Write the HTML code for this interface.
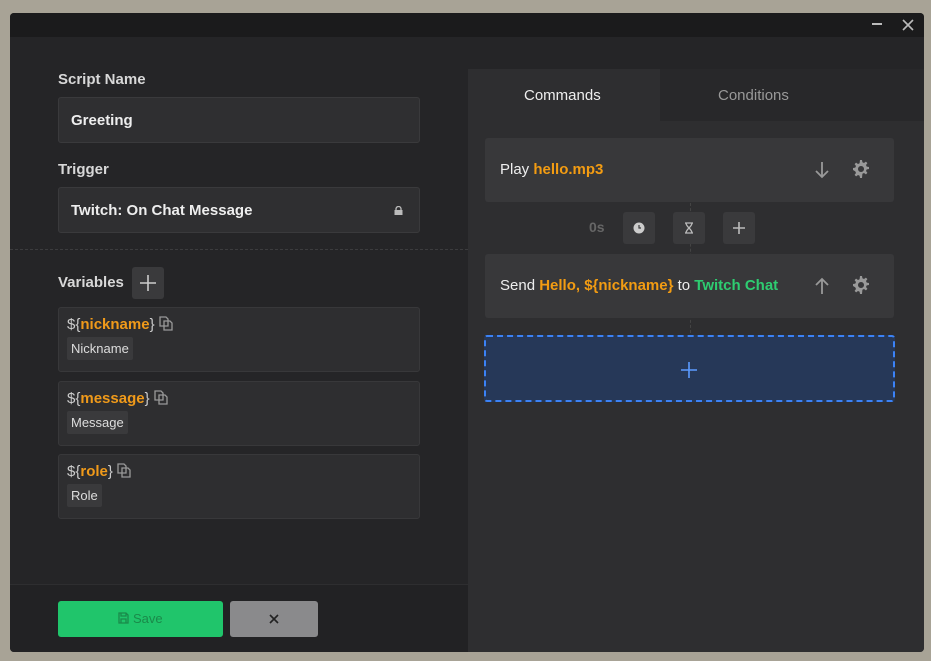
<!DOCTYPE html>
<html><head><style>
*{box-sizing:border-box;margin:0;padding:0}
body{width:931px;height:661px;background:#a8a396;font-family:"Liberation Sans",sans-serif;position:relative;overflow:hidden}
.win{position:absolute;left:10px;top:13px;width:914px;height:639px;background:#252527;border-radius:4px;overflow:hidden}
.title{position:absolute;left:0;top:0;width:914px;height:24px;background:#1b1b1c}
.abs{position:absolute}
.lbl{color:#d8d8d8;font-size:15px;font-weight:bold}
.inp{position:absolute;left:48px;width:362px;height:46px;background:#2f2f31;border:1px solid #3a3a3c;border-radius:3px;color:#eee;font-size:15px;font-weight:bold;padding:14px 12px}
.var{position:absolute;left:48px;width:362px;height:65px;background:#2e2e30;border:1px solid #38383a;border-radius:3px;padding:8px 8px}
.vn{color:#ccc;font-size:15px}
.vn b{color:#f09a1a}
.tag{display:inline-block;background:#3a3a3c;color:#ddd;font-size:13px;padding:4px 4px;margin-top:4px;border-radius:2px}
.o{color:#f39c12;font-weight:bold}
.g{color:#2ecc71;font-weight:bold}
.cmd{position:absolute;left:475px;width:409px;height:64px;background:#38383a;border-radius:3px;color:#eee;font-size:15px;padding:23px 15px}
.sb{position:absolute;width:32px;height:32px;background:#3a3a3c;border-radius:3px;color:#bbb;text-align:center;line-height:32px;font-size:18px}
</style></head><body>
<svg width="0" height="0" style="position:absolute"><defs>
<g id="gear"><path fill="#999" fill-rule="evenodd" d="M8 0h2l.4 2.3 1.6.7 1.9-1.4 1.5 1.5-1.4 1.9.7 1.6 2.3.4v2l-2.3.4-.7 1.6 1.4 1.9-1.5 1.5-1.9-1.4-1.6.7L10 18H8l-.4-2.3-1.6-.7-1.9 1.4-1.5-1.5 1.4-1.9-.7-1.6L1 10V8l2.3-.4.7-1.6-1.4-1.9 1.5-1.5 1.9 1.4 1.6-.7zM9 6a3 3 0 1 0 .01 0z"/></g>
<g id="copy"><path fill="none" stroke="#999" stroke-width="1.3" d="M1 1h6l2 2v7H1zM5 5h6l2 2v7H5z"/></g>
</defs></svg>
<div class="win">
<div class="title"></div>
<div class="abs" style="left:862px;top:10px;width:10px;height:2px;background:#bbb"></div>
<svg class="abs" style="left:892px;top:6px" width="12" height="12"><path d="M1 1L11 11M11 1L1 11" stroke="#bbb" stroke-width="1.6"/></svg>
<div class="abs" style="left:458px;top:56px;width:456px;height:583px;background:#2e2e30"></div>
<div class="abs" style="left:650px;top:56px;width:264px;height:52px;background:#28282a"></div>
<div class="abs" style="left:514px;top:74px;color:#eee;font-size:15px">Commands</div>
<div class="abs" style="left:708px;top:74px;color:#999;font-size:15px">Conditions</div>

<div class="abs lbl" style="left:48px;top:58px">Script Name</div>
<div class="inp" style="top:84px">Greeting</div>
<div class="abs lbl" style="left:48px;top:148px">Trigger</div>
<div class="inp" style="top:174px">Twitch: On Chat Message<svg class="abs" style="left:335px;top:18px" width="9" height="9"><rect x="0.5" y="4" width="8" height="5" fill="#bbb"/><path d="M2 4.5V3a2.5 2.5 0 0 1 5 0v1.5" stroke="#bbb" fill="none" stroke-width="1.3"/></svg></div>
<div class="abs" style="left:0;top:236px;width:458px;border-top:1px dashed #3c3c3e"></div>
<div class="abs lbl" style="left:48px;top:261px">Variables</div>
<div class="sb" style="left:122px;top:254px"><svg width="32" height="32"><path d="M16 8v16M8 16h16" stroke="#ccc" stroke-width="1.6"/></svg></div>
<div class="var" style="top:294px"><div class="vn">${<b>nickname</b>} <svg width="15" height="15" style="vertical-align:-2px"><use href="#copy"/></svg></div><span class="tag">Nickname</span></div>
<div class="var" style="top:368px"><div class="vn">${<b>message</b>} <svg width="15" height="15" style="vertical-align:-2px"><use href="#copy"/></svg></div><span class="tag">Message</span></div>
<div class="var" style="top:441px"><div class="vn">${<b>role</b>} <svg width="15" height="15" style="vertical-align:-2px"><use href="#copy"/></svg></div><span class="tag">Role</span></div>

<div class="abs" style="left:0;top:571px;width:458px;height:68px;background:#222224;border-top:1px solid #2e2e30"></div>
<div class="abs" style="left:48px;top:588px;width:165px;height:36px;background:#20c56b;border-radius:3px;color:#1a8a4a;font-size:13px;text-align:center;line-height:36px"><svg width="11" height="12" style="vertical-align:-1px"><path d="M1 1h7l2 2v8H1zM3 1v3h5V1M3 11V7h5v4" fill="none" stroke="#1a8a4a" stroke-width="1.3"/></svg> Save</div>
<div class="abs" style="left:220px;top:588px;width:88px;height:36px;background:#8a8a8c;border-radius:3px"><svg class="abs" style="left:39px;top:13px" width="10" height="10"><path d="M1 1L9 9M9 1L1 9" stroke="#222" stroke-width="1.6"/></svg></div>

<div class="abs" style="left:680px;top:190px;width:1px;height:130px;border-left:1px dashed #444"></div>
<div class="cmd" style="top:125px">Play <span class="o">hello.mp3</span><svg class="abs" style="left:330px;top:23px" width="14" height="18"><path d="M7 1v15M1 10l6 6 6-6" stroke="#999" stroke-width="1.8" fill="none"/></svg><svg class="abs" style="left:367px;top:22px" width="18" height="18"><use href="#gear"/></svg></div>
<div class="abs" style="left:579px;top:206px;color:#666;font-size:14px;font-weight:bold">0s</div>
<div class="sb" style="left:613px;top:199px"><svg width="32" height="32"><circle cx="16" cy="16" r="5.5" fill="#ccc"/><path d="M16 13v3h2" stroke="#3a3a3c" stroke-width="1.2" fill="none"/></svg></div>
<div class="sb" style="left:663px;top:199px"><svg width="32" height="32"><path d="M12 11h8M12 21h8M13 11c0 4 6 6 6 10M19 11c0 4-6 6-6 10" stroke="#bbb" stroke-width="1.3" fill="none"/></svg></div>
<div class="sb" style="left:713px;top:199px"><svg width="32" height="32"><path d="M16 10v12M10 16h12" stroke="#bbb" stroke-width="1.6"/></svg></div>
<div class="cmd" style="top:241px">Send <span class="o">Hello, ${nickname}</span> to <span class="g">Twitch Chat</span><svg class="abs" style="left:330px;top:23px" width="14" height="18"><path d="M7 17V2M1 8l6-6 6 6" stroke="#999" stroke-width="1.8" fill="none"/></svg><svg class="abs" style="left:367px;top:22px" width="18" height="18"><use href="#gear"/></svg></div>
<div class="abs" style="left:474px;top:322px;width:411px;height:67px;background:#263858;border:2px dashed #3b82f6;border-radius:3px"><svg class="abs" style="left:194px;top:24px" width="18" height="18"><path d="M9 1v16M1 9h16" stroke="#5b9bff" stroke-width="1.6"/></svg></div>
</div>
</body></html>
